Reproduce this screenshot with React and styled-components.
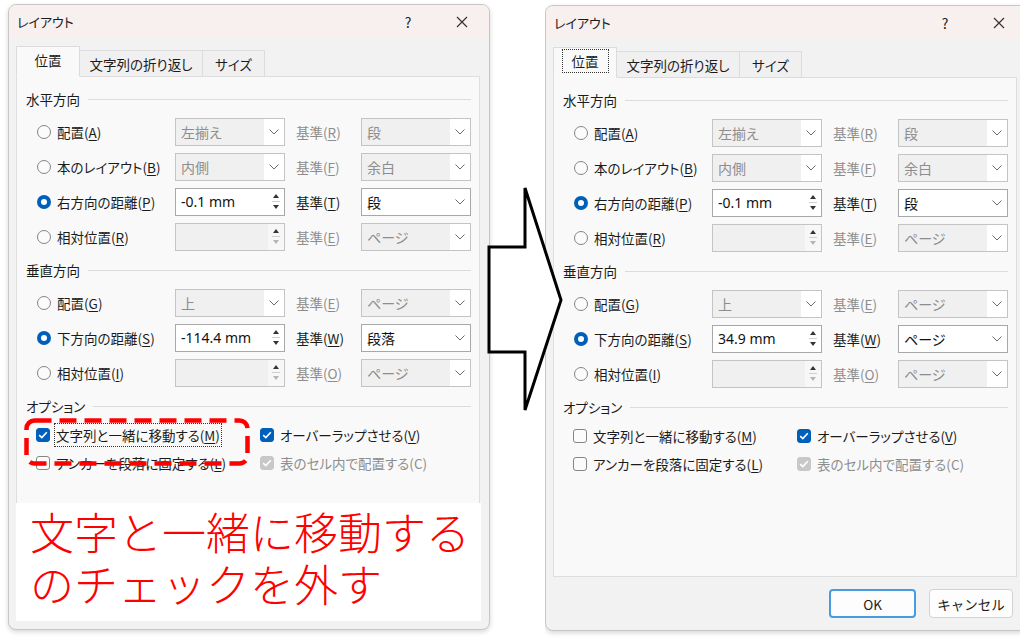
import React from 'react'
import styled, { createGlobalStyle } from 'styled-components'

const GlobalStyle = createGlobalStyle`
  html, body { margin:0; padding:0; background:#fff; }
  body {
    width:1024px; height:642px; overflow:hidden;
    font-family:"Noto Sans CJK JP", "Noto Sans", sans-serif;
    color:#1b1b1b;
  }
`

const Page = styled.div`
  position: relative;
  display: flex;
  align-items: flex-start;
  width: 1024px;
  height: 642px;
  padding-left: 8px;
  gap: 55px;
  box-sizing: border-box;
`

const Clip = styled.div`
  flex: none;
  width: ${p => p.$width}px;
  height: 642px;
  overflow: hidden;
`

const Dialog = styled.div`
  position: relative;
  flex: none;
  width: 482px;
  height: 626px;
  margin-top: ${p => p.$top}px;
  background: #f2f2f2;
  border: 1px solid #c6c6c6;
  border-radius: 8px;
  box-shadow: 0 2px 5px rgba(0,0,0,.16);
  display: flex;
  flex-direction: column;
  overflow: hidden;
  box-sizing: border-box;
  font-size: 13.5px;
  font-feature-settings: "palt";
`

const TitleBar = styled.div`
  height: 33px;
  flex: none;
  background: #f7f0ee;
  display: flex;
  align-items: center;
  padding: 0 17px 0 8px;
  font-size: 13px;
`

const TitleText = styled.span`
  flex: 1;
`

const TitleIcon = styled.span`
  width: 20px;
  display: flex;
  justify-content: center;
  align-items: center;
  font-size: 14px;
  color: #222;
  margin-left: ${p => p.$gap || 0}px;
`

const Body = styled.div`
  flex: 1;
  display: flex;
  flex-direction: column;
  padding: 9px 9px 0 7px;
`

const Tabs = styled.div`
  display: flex;
  align-items: flex-end;
  height: 30px;
  position: relative;
  z-index: 1;
  margin-bottom: -1px;
`

const Tab = styled.div`
  width: ${p => p.$w}px;
  height: ${p => (p.$active ? 31 : 27)}px;
  box-sizing: border-box;
  border: 1px solid #dcdcdc;
  border-bottom: ${p => (p.$active ? '1px solid #f9f9f9' : '1px solid #dcdcdc')};
  border-left: ${p => (p.$first ? '1px solid #dcdcdc' : 'none')};
  background: ${p => (p.$active ? '#f9f9f9' : '#f0f0f0')};
  display: flex;
  align-items: center;
  justify-content: center;
  font-size: 13.5px;
  padding-bottom: ${p => (p.$active ? 3 : 0)}px;
`

const TabLabel = styled.span`
  padding: 1px 9px;
  outline: ${p => (p.$focus ? '1px dotted #333' : 'none')};
`

const Panel = styled.div`
  height: 500px;
  box-sizing: border-box;
  background: #f9f9f9;
  border: 1px solid #dedede;
  padding-top: 11px;
`

const Heading = styled.div`
  height: 22px;
  display: flex;
  align-items: center;
  padding: 0 8px 0 9px;
  margin-top: ${p => p.$mt || 0}px;
  font-size: 13.5px;
  &::after {
    content: '';
    flex: 1;
    height: 1px;
    background: #dcdcdc;
    margin-left: 8px;
  }
`

const RadioGrid = styled.div`
  display: grid;
  grid-template-columns: 138px 110px 76px 110px;
  grid-auto-rows: 35px;
  padding-left: 20px;
  margin-top: 4px;
  align-items: center;
`

const CheckGrid = styled.div`
  display: grid;
  grid-template-columns: 224px auto;
  grid-auto-rows: 28px;
  padding-left: 19px;
  margin-top: 4px;
  align-items: center;
`

const OptionLabel = styled.label`
  display: flex;
  align-items: center;
  gap: 6px;
  white-space: nowrap;
  color: ${p => (p.$disabled ? '#8d8d8d' : '#1b1b1b')};
`

const LabelText = styled.span`
  outline: ${p => (p.$focus ? '1px dotted #333' : 'none')};
  outline-offset: 1px;
  u { text-underline-offset: 2px; }
`

const RadioDot = styled.span`
  width: 14px;
  height: 14px;
  flex: none;
  box-sizing: border-box;
  border-radius: 50%;
  border: ${p => (p.$on ? '4px solid #005fb8' : '1px solid #858585')};
  background: ${p => (p.$on ? '#fff' : '#fbfbfb')};
`

const CheckBox = styled.span`
  width: 14px;
  height: 14px;
  flex: none;
  box-sizing: border-box;
  border-radius: 3px;
  border: 1px solid ${p => (p.$disabled ? '#c8c8c8' : p.$on ? '#005fb8' : '#858585')};
  background: ${p => (p.$disabled ? '#c8c8c8' : p.$on ? '#005fb8' : '#fbfbfb')};
  display: flex;
  align-items: center;
  justify-content: center;
`

const BaseLabel = styled.span`
  padding-left: 11px;
  color: ${p => (p.$disabled ? '#8d8d8d' : '#1b1b1b')};
  u { text-underline-offset: 2px; }
`

const Field = styled.div`
  height: 28px;
  box-sizing: border-box;
  border: 1px solid ${p => (p.$disabled ? '#c4c4c4' : '#a8a8a8')};
  background: ${p => (p.$disabled ? '#f0f0f0' : '#fff')};
  color: ${p => (p.$disabled ? '#8d8d8d' : '#111')};
  display: flex;
  align-items: stretch;
`

const FieldText = styled.span`
  flex: 1;
  display: flex;
  align-items: center;
  padding-left: 5px;
  font-size: 14px;
  font-family: "Noto Sans", "Noto Sans CJK JP", sans-serif;
  &:lang(ja) { font-family: "Noto Sans CJK JP", sans-serif; }
`

const ArrowCell = styled.span`
  width: 20px;
  background: #fff;
  display: flex;
  align-items: center;
  justify-content: center;
`

const SpinCell = styled.span`
  width: 16px;
  background: ${p => (p.$disabled ? '#f7f7f7' : '#fff')};
  display: flex;
  flex-direction: column;
  align-items: center;
  justify-content: center;
  gap: 3px;
`

const Tri = styled.span`
  width: 0;
  height: 0;
  border-left: 3.5px solid transparent;
  border-right: 3.5px solid transparent;
  ${p => (p.$up ? 'border-bottom' : 'border-top')}: 4px solid ${p => p.$color};
`

const SpinLine = styled.span`
  width: 8px;
  height: 1px;
  background: #cfcfcf;
`

const Footer = styled.div`
  display: flex;
  justify-content: flex-end;
  gap: 13px;
  padding: 12px 4px 0 0;
`

const Button = styled.button`
  width: ${p => p.$w}px;
  height: 29px;
  box-sizing: border-box;
  background: #fdfdfd;
  border: ${p => (p.$primary ? '2px solid #4a9ae0' : '1px solid #d2d2d2')};
  border-radius: 4px;
  font-family: inherit;
  font-size: 13.5px;
  color: #1b1b1b;
  padding: 0;
`

const Callout = styled.div`
  position: absolute;
  left: 7px;
  top: 498px;
  width: 465px;
  height: 118px;
  background: #fff;
  padding: 2px 0 0 14px;
  box-sizing: border-box;
  color: #ff0000;
  font-size: 44px;
  line-height: 52px;
  font-weight: 300;
  font-feature-settings: normal;
  white-space: nowrap;
  z-index: 3;
`

const DashBox = styled.svg`
  position: absolute;
  left: 15px;
  top: 413px;
  z-index: 3;
`

const ArrowSvg = styled.svg`
  position: absolute;
  left: 486px;
  top: 185px;
  z-index: 4;
`

const Chevron = () => (
  <svg width="10" height="6" viewBox="0 0 10 6">
    <polyline points="0.5,0.5 5,5 9.5,0.5" fill="none" stroke="#6a6a6a" strokeWidth="1" />
  </svg>
)

const Tick = () => (
  <svg width="10" height="8" viewBox="0 0 10 8">
    <polyline points="1.2,4.2 3.8,6.6 8.8,1.2" fill="none" stroke="#fff" strokeWidth="1.6" />
  </svg>
)

const Mn = ({ text, k, on = true }) => (
  <>
    {text}({on ? <u>{k}</u> : k})
  </>
)

const Select = ({ value, disabled }) => (
  <Field $disabled={disabled}>
    <FieldText lang="ja">{value}</FieldText>
    <ArrowCell><Chevron /></ArrowCell>
  </Field>
)

const Spin = ({ value, disabled }) => (
  <Field $disabled={disabled}>
    <FieldText>{value}</FieldText>
    <SpinCell $disabled={disabled}>
      <Tri $up $color="#333" />
      <SpinLine />
      <Tri $color={disabled ? '#b5b5b5' : '#333'} />
    </SpinCell>
  </Field>
)

const RadioRow = ({ label, k, on, control, base, baseKey, baseOn }) => (
  <>
    <OptionLabel>
      <RadioDot $on={on} />
      <LabelText><Mn text={label} k={k} /></LabelText>
    </OptionLabel>
    {control}
    <BaseLabel $disabled={!baseOn}><Mn text="基準" k={baseKey} on={baseOn} /></BaseLabel>
    {base}
  </>
)

const Check = ({ label, k, on, disabled, focus }) => (
  <OptionLabel $disabled={disabled}>
    <CheckBox $on={on} $disabled={disabled}>{on && <Tick />}</CheckBox>
    <LabelText $focus={focus}><Mn text={label} k={k} on={!disabled} /></LabelText>
  </OptionLabel>
)

const LayoutDialog = ({ top, moveWithText, vDist, vBase, tabFocus, children }) => (
  <Dialog $top={top}>
    <TitleBar>
      <TitleText>レイアウト</TitleText>
      <TitleIcon>?</TitleIcon>
      <TitleIcon $gap={34}>
        <svg width="12" height="12" viewBox="0 0 12 12">
          <path d="M1 1L11 11M11 1L1 11" stroke="#333" strokeWidth="1.2" />
        </svg>
      </TitleIcon>
    </TitleBar>
    <Body>
      <Tabs>
        <Tab $w={64} $active $first><TabLabel $focus={tabFocus}>位置</TabLabel></Tab>
        <Tab $w={123}>文字列の折り返し</Tab>
        <Tab $w={62}>サイズ</Tab>
      </Tabs>
      <Panel>
        <Heading>水平方向</Heading>
        <RadioGrid>
          <RadioRow label="配置" k="A" control={<Select value="左揃え" disabled />}
            baseKey="R" base={<Select value="段" disabled />} />
          <RadioRow label="本のレイアウト" k="B" control={<Select value="内側" disabled />}
            baseKey="F" base={<Select value="余白" disabled />} />
          <RadioRow label="右方向の距離" k="P" on control={<Spin value="-0.1 mm" />}
            baseKey="T" baseOn base={<Select value="段" />} />
          <RadioRow label="相対位置" k="R" control={<Spin value="" disabled />}
            baseKey="E" base={<Select value="ページ" disabled />} />
        </RadioGrid>
        <Heading $mt={5}>垂直方向</Heading>
        <RadioGrid>
          <RadioRow label="配置" k="G" control={<Select value="上" disabled />}
            baseKey="E" base={<Select value="ページ" disabled />} />
          <RadioRow label="下方向の距離" k="S" on control={<Spin value={vDist} />}
            baseKey="W" baseOn base={<Select value={vBase} />} />
          <RadioRow label="相対位置" k="I" control={<Spin value="" disabled />}
            baseKey="O" base={<Select value="ページ" disabled />} />
        </RadioGrid>
        <Heading $mt={5}>オプション</Heading>
        <CheckGrid>
          <Check label="文字列と一緒に移動する" k="M" on={moveWithText} focus={moveWithText} />
          <Check label="オーバーラップさせる" k="V" on />
          <Check label="アンカーを段落に固定する" k="L" />
          <Check label="表のセル内で配置する" k="C" on disabled />
        </CheckGrid>
      </Panel>
      <Footer>
        <Button $w={87} $primary>OK</Button>
        <Button $w={84}>キャンセル</Button>
      </Footer>
    </Body>
    {children}
  </Dialog>
)

export default function App() {
  return (
    <>
      <GlobalStyle />
      <Page>
        <LayoutDialog top={4} moveWithText vDist="-114.4 mm" vBase="段落">
          <DashBox width="226" height="48" viewBox="0 0 226 48">
            <rect x="2.5" y="2.5" width="221" height="43" rx="8" ry="8" fill="none"
              stroke="#ff0000" strokeWidth="4.5" strokeDasharray="17 8" />
          </DashBox>
          <Callout>
            文字と一緒に移動する<br />のチェックを外す
          </Callout>
        </LayoutDialog>
        <Clip $width={475}>
          <LayoutDialog top={5} tabFocus vDist="34.9 mm" vBase="ページ" />
        </Clip>
        <ArrowSvg width="80" height="230" viewBox="0 0 80 230">
          <polygon points="3,62 39,62 39,3 75,115 39,225 39,167 3,167"
            fill="#fff" stroke="#000" strokeWidth="3" strokeLinejoin="miter" />
        </ArrowSvg>
      </Page>
    </>
  )
}
